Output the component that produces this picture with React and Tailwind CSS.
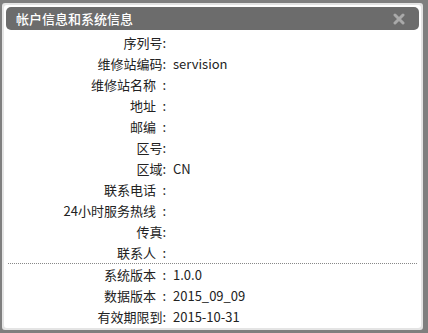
export default function App() {
  const rows1 = [
    ["序列号:", ""],
    ["维修站编码:", "servision"],
    ["维修站名称\u2002:", ""],
    ["地址\u2002:", ""],
    ["邮编\u2002:", ""],
    ["区号:", ""],
    ["区域:", "CN"],
    ["联系电话\u2002:", ""],
    ["24小时服务热线\u2002:", ""],
    ["传真:", ""],
    ["联系人\u2002:", ""],
  ];
  const rows2 = [
    ["系统版本\u2002:", "1.0.0"],
    ["数据版本\u2002:", "2015_09_09"],
    ["有效期限到:", "2015-10-31"],
  ];
  const Row = ({ l, v }) => (
    <div className="flex h-[21px] items-center">
      <div className="w-[160px] text-right whitespace-pre">{l}</div>
      <div className="ml-[7px] whitespace-nowrap">{v}</div>
    </div>
  );
  return (
    <div
      className="w-[428px] h-[333px] bg-[#7f7f7f] pt-[3px] pl-[2px] pr-[5px] pb-[3px] overflow-hidden"
      style={{ fontFamily: '"Noto Sans CJK SC", "Noto Sans", sans-serif' }}
    >
      <div className="h-full bg-[#e4e4e4] rounded-[3px] p-[2px]">
        <div className="h-full bg-white rounded-[3px] px-[2px] pt-[2px]">
          <div className="h-[23px] bg-[#6c6c6c] rounded-[5px] flex items-center justify-between pl-[10px] pr-[14px]">
            <span className="text-white text-[13px] font-medium leading-none">帐户信息和系统信息</span>
            <svg width="12" height="12" viewBox="0 0 12 12">
              <path d="M2 2 L10 10 M10 2 L2 10" stroke="#a9a9a9" strokeWidth="3" strokeLinecap="round" />
            </svg>
          </div>
          <div className="pt-[2px] text-[13px] text-[#222]">
            {rows1.map(([l, v]) => (
              <Row key={l} l={l} v={v} />
            ))}
            <div className="mx-[2px] border-t border-dotted border-[#888]" />
            {rows2.map(([l, v]) => (
              <Row key={l} l={l} v={v} />
            ))}
          </div>
        </div>
      </div>
    </div>
  );
}
